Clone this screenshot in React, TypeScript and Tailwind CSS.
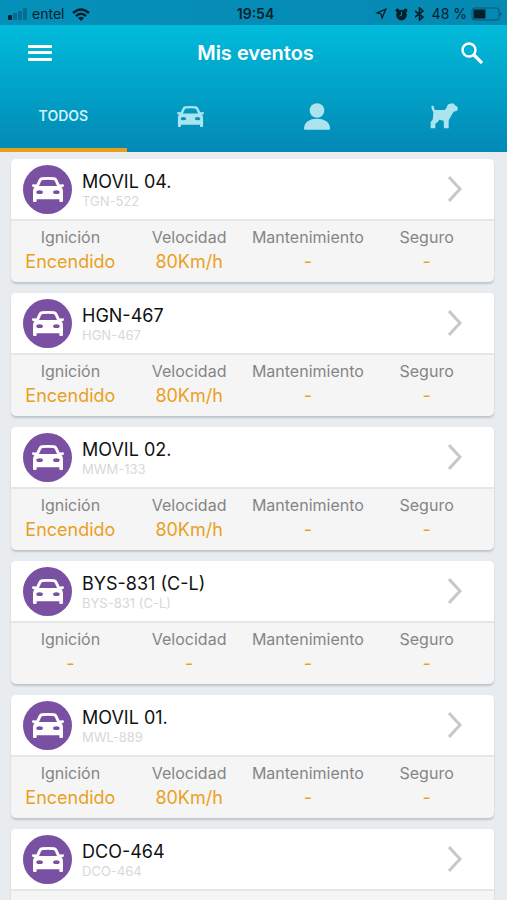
type Vehicle = {
  name: string;
  plate: string;
  ignition: string;
  speed: string;
  maintenance: string;
  insurance: string;
};

const vehicles: Vehicle[] = [
  { name: "MOVIL 04.", plate: "TGN-522", ignition: "Encendido", speed: "80Km/h", maintenance: "-", insurance: "-" },
  { name: "HGN-467", plate: "HGN-467", ignition: "Encendido", speed: "80Km/h", maintenance: "-", insurance: "-" },
  { name: "MOVIL 02.", plate: "MWM-133", ignition: "Encendido", speed: "80Km/h", maintenance: "-", insurance: "-" },
  { name: "BYS-831 (C-L)", plate: "BYS-831 (C-L)", ignition: "-", speed: "-", maintenance: "-", insurance: "-" },
  { name: "MOVIL 01.", plate: "MWL-889", ignition: "Encendido", speed: "80Km/h", maintenance: "-", insurance: "-" },
  { name: "DCO-464", plate: "DCO-464", ignition: "Encendido", speed: "80Km/h", maintenance: "-", insurance: "-" },
];

function CarIcon({ className }: { className: string }) {
  return (
    <svg viewBox="0 0 97 76" className={className} fill="currentColor" fillRule="evenodd" aria-hidden="true">
      <path d="M29 1 Q48 -1 68 1 Q74 2 77 8 L84 23 L94 22 Q97 22 97 26 Q97 31 92 31 L89 31 Q94 35 94 42 L94 73 Q94 76 91 76 L86 76 Q83 76 83 73 L83 68 L14 68 L14 73 Q14 76 11 76 L6 76 Q3 76 3 73 L3 42 Q3 35 8 31 L5 31 Q0 31 0 26 Q0 22 3 22 L13 23 L20 8 Q23 2 29 1 Z M33 9 Q30 9 28 12 L21 27 L76 27 L69 12 Q67 9 64 9 Q48 7 33 9 Z M13 46 A10 6 0 1 0 33 46 A10 6 0 1 0 13 46 Z M64 46 A10 6 0 1 0 84 46 A10 6 0 1 0 64 46 Z" />
    </svg>
  );
}

function PersonIcon() {
  return (
    <svg viewBox="0 0 78 80" className="h-[27px] w-[26px]" fill="currentColor" aria-hidden="true">
      <circle cx="39" cy="22" r="22" />
      <path d="M0 77 C0 57 17 47 39 47 C61 47 78 57 78 77 Q78 80 75 80 L3 80 Q0 80 0 77 Z" />
    </svg>
  );
}

function DogIcon() {
  return (
    <svg viewBox="0 0 84 78" className="h-[26px] w-7" fill="currentColor" aria-hidden="true">
      <path d="M4 9 Q7 6 11 10 L14 21 L44 21 Q50 17 51 10 Q52 3 60 2 L68 1 Q73 3 75 7 L82 11 Q85 18 81 23 L71 26 Q64 36 60 45 Q56 50 56 56 L56 76 L42 76 L41 53 L28 50 Q24 58 16 62 L16 76 L2 76 L2 57 Q9 52 9 45 L10 28 Q4 19 4 9 Z" />
    </svg>
  );
}

function StatusBar() {
  return (
    <div className="grid h-[25px] shrink-0 grid-cols-[1fr_auto_1fr] items-center bg-gradient-to-r from-[#0590ba] to-[#0589b3] pl-2 pr-1 pt-[3px] text-sm leading-5 text-[#05202b]">
      <div className="flex items-center">
        <svg viewBox="0 0 20 12" className="mr-1 h-3 w-5" fill="currentColor" aria-hidden="true">
          <rect x="0" y="7" width="4" height="5" rx="1" />
          <g opacity="0.3">
            <rect x="5" y="5" width="4" height="7" rx="1" />
            <rect x="10" y="3" width="4" height="9" rx="1" />
            <rect x="15" y="0" width="4" height="12" rx="1" />
          </g>
        </svg>
        <span>entel</span>
        <svg viewBox="0 0 18 13" className="ml-2 h-[13px] w-[18px]" fill="none" stroke="currentColor" strokeWidth="2.4" aria-hidden="true">
          <path d="M1 5 Q9 -2 17 5" />
          <path d="M4 8 Q9 3.600 14 8" />
          <path d="M6 10 Q9 7.500 12 10 L9 13 Z" fill="currentColor" stroke="none" />
        </svg>
      </div>
      <time className="font-semibold">19:54</time>
      <div className="flex items-center justify-end">
        <svg viewBox="0 0 12 12" className="mr-2 h-3 w-3" fill="currentColor" fillRule="evenodd" aria-hidden="true">
          <path d="M12 0 L7 12 L5.500 6.500 L0 5 Z M9.500 2.400 L4 4.900 L6.500 5.500 L7.200 8 Z" />
        </svg>
        <svg viewBox="0 0 13 13" className="mr-[7px] h-[13px] w-[13px]" fill="currentColor" aria-hidden="true">
          <circle cx="6.500" cy="7" r="5.300" />
          <circle cx="2.500" cy="2.500" r="1.900" />
          <circle cx="10.500" cy="2.500" r="1.900" />
          <path d="M6.500 3.800 L6.500 7.300 L4.500 8" fill="none" stroke="#058db7" strokeWidth="1" />
        </svg>
        <svg viewBox="0 0 9 14" className="mr-2 h-3.5 w-[9px]" fill="none" stroke="currentColor" strokeWidth="1.600" aria-hidden="true">
          <path d="M0 4 L8 10 L4.500 13 L4.500 1 L8 4 L0 10" />
        </svg>
        <span>48 %</span>
        <svg viewBox="0 0 32 14" className="ml-1 h-3.5 w-8" aria-hidden="true">
          <rect x="1" y="1" width="27" height="12" rx="2.500" fill="none" stroke="currentColor" opacity="0.45" />
          <rect x="2.500" y="2.500" width="12" height="9" fill="currentColor" />
          <path d="M29 5 Q32 7 29 9 Z" fill="currentColor" opacity="0.45" />
        </svg>
      </div>
    </div>
  );
}

function Stat({ label, value }: { label: string; value: string }) {
  return (
    <div className="min-w-0 whitespace-nowrap">
      <dt className="text-base leading-6 text-[#858585]">{label}</dt>
      <dd className="text-lg leading-[26px] text-[#eaa01f]">{value}</dd>
    </div>
  );
}

function VehicleCard({ vehicle }: { vehicle: Vehicle }) {
  return (
    <li className="shrink-0 overflow-hidden rounded-[5px] bg-[#f5f5f5] shadow-[0_2px_2px_#bfc5c9]">
      <a href="#detalle" className="flex h-[62px] items-center border-b-2 border-[#e6e6e6] bg-white pl-3 pr-8">
        <span className="flex h-[49px] w-[49px] shrink-0 items-center justify-center rounded-full bg-[#7a50a2] text-white">
          <CarIcon className="h-[25px] w-8" />
        </span>
        <span className="ml-2.5 flex min-w-0 flex-1 flex-col pt-[3px]">
          <span className="text-lg leading-5 text-[#111111]">{vehicle.name}</span>
          <span className="text-[13px] leading-[18px] text-[#d8d8d8]">{vehicle.plate}</span>
        </span>
        <svg viewBox="0 0 14 26" className="h-[26px] w-3.5" fill="none" stroke="#c8c8c8" strokeWidth="3" aria-hidden="true">
          <path d="M1 1 L12 13 L1 25" />
        </svg>
      </a>
      <dl className="grid grid-cols-4 pb-[7px] pr-2 pt-1 text-center">
        <Stat label="Ignición" value={vehicle.ignition} />
        <Stat label="Velocidad" value={vehicle.speed} />
        <Stat label="Mantenimiento" value={vehicle.maintenance} />
        <Stat label="Seguro" value={vehicle.insurance} />
      </dl>
    </li>
  );
}

export default function App() {
  return (
    <div className="flex h-screen flex-col bg-[#e9ecef] font-['Inter','Liberation_Sans',sans-serif]">
      <StatusBar />
      <header className="shrink-0 bg-gradient-to-b from-[#02bbda] to-[#0289b5] text-white">
        <div className="grid h-[55px] grid-cols-[1fr_auto_1fr] items-center pl-7 pr-6">
          <button type="button" aria-label="Menú" className="justify-self-start">
            <svg viewBox="0 0 24 16" className="h-4 w-6" fill="currentColor" aria-hidden="true">
              <rect y="0" width="24" height="3" rx="1" />
              <rect y="6" width="24" height="3" rx="1" />
              <rect y="13" width="24" height="3" rx="1" />
            </svg>
          </button>
          <h1 className="text-xl font-semibold leading-6">Mis eventos</h1>
          <button type="button" aria-label="Buscar" className="justify-self-end">
            <svg viewBox="0 0 22 22" className="h-[22px] w-[22px]" fill="none" stroke="currentColor" aria-hidden="true">
              <circle cx="8" cy="8" r="6.500" strokeWidth="2.400" />
              <path d="M13 13 L21 21" strokeWidth="3.200" />
            </svg>
          </button>
        </div>
        <nav className="grid h-[72px] grid-cols-4 text-[#abe3ef]">
          <button type="button" className="flex items-center justify-center border-b-4 border-[#e7a01b] pt-1 text-sm font-semibold text-[#cdf1f7]">
            TODOS
          </button>
          <button type="button" aria-label="Vehículos" className="flex items-center justify-center border-b-4 border-transparent pt-1">
            <CarIcon className="h-[21px] w-[27px]" />
          </button>
          <button type="button" aria-label="Personas" className="flex items-center justify-center border-b-4 border-transparent pt-1">
            <PersonIcon />
          </button>
          <button type="button" aria-label="Mascotas" className="flex items-center justify-center border-b-4 border-transparent pt-1">
            <DogIcon />
          </button>
        </nav>
      </header>
      <main className="min-h-0 flex-1 overflow-y-auto [scrollbar-width:none]">
        <ul className="flex flex-col gap-[11px] pb-3 pl-[11px] pr-[13px] pt-[7px]">
          {vehicles.map((vehicle) => (
            <VehicleCard key={vehicle.name} vehicle={vehicle} />
          ))}
        </ul>
      </main>
    </div>
  );
}
